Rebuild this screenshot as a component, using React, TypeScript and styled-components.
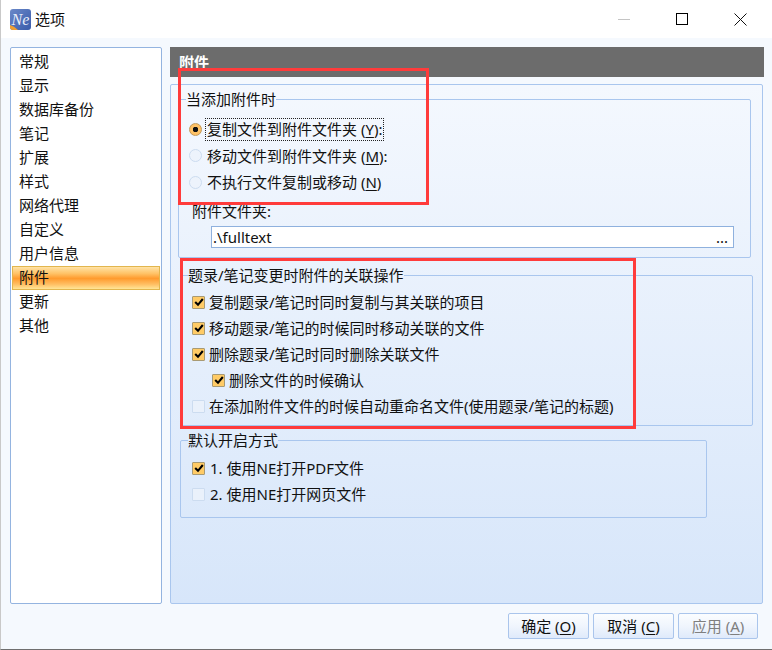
import React from "react";
import styled, { createGlobalStyle } from "styled-components";

const Global = createGlobalStyle`
  html, body { margin: 0; padding: 0; background: #fff; }
  body { font-family: "Noto Sans", "Noto Sans CJK SC", sans-serif; font-size: 15px; color: #111; }
  * { box-sizing: border-box; }
`;

const Win = styled.div`
  position: relative;
  width: 772px;
  height: 650px;
  display: flex;
  flex-direction: column;
  background: #f5f9fe;
  border-left: 1px solid #c9c9c9;
  border-bottom: 1px solid #6f6f6f;
  overflow: hidden;
`;
const TitleBar = styled.div`
  height: 38px;
  flex: none;
  display: flex;
  align-items: center;
  background: #fff;
  padding-left: 9px;
`;
const TitleText = styled.span`
  margin-left: 4px;
  font-size: 15px;
  line-height: 20px;
`;
const Controls = styled.div`
  margin-left: auto;
  display: flex;
  align-items: center;
  padding-right: 25px;
  gap: 46px;
`;
const Content = styled.div`
  flex: 1;
  display: flex;
  flex-direction: column;
  padding: 9px 8px 9px 9px;
  min-height: 0;
`;
const MainRow = styled.div`
  display: flex;
  gap: 8px;
  height: 557px;
  flex: none;
`;
const Sidebar = styled.div`
  width: 152px;
  flex: none;
  background: #fff;
  border: 1px solid #94b4e0;
  border-radius: 2px;
  padding: 2px 1px;
`;
const NavItem = styled.div<{ $active?: boolean }>`
  height: 24px;
  line-height: 21px;
  padding-left: 6px;
  border: 1px solid ${(p) => (p.$active ? "#e2b64e" : "transparent")};
  background: ${(p) =>
    p.$active
      ? "linear-gradient(180deg,#ffe3a6 0%,#ffc266 30%,#ff9b2e 52%,#ffbe62 78%,#ffe596 100%)"
      : "transparent"};
`;
const Right = styled.div`
  flex: 1;
  display: flex;
  flex-direction: column;
  gap: 7px;
  min-width: 0;
`;
const HeaderBar = styled.div`
  height: 30px;
  flex: none;
  background: #6c6c6c;
  color: #fff;
  font-weight: 700;
  font-size: 15px;
  line-height: 31px;
  padding-left: 9px;
`;
const Panel = styled.div`
  flex: 1;
  margin-right: 1px;
  background: linear-gradient(180deg, #f4f8fe 0%, #d7e6fa 100%);
  border: 1px solid #a9c6ee;
  border-radius: 2px;
  padding: 4px 0 0 0;
  display: flex;
  flex-direction: column;
`;
const Group = styled.fieldset<{ $left: number; $width: number; $top: number; $height: number; $legendLeft: number }>`
  margin: ${(p) => p.$top}px 0 0 ${(p) => p.$left}px;
  width: ${(p) => p.$width}px;
  height: ${(p) => p.$height}px;
  min-width: 0;
  flex: none;
  padding: 0;
  border: 1px solid #a9c6ee;
  border-radius: 2px;
  legend {
    margin-left: ${(p) => p.$legendLeft}px;
    padding: 0;
    height: 20px;
    line-height: 20px;
    font-size: 15px;
  }
`;
const Rows = styled.div<{ $pad: number; $left: number }>`
  display: flex;
  flex-direction: column;
  padding: ${(p) => p.$pad}px 0 0 ${(p) => p.$left}px;
`;
const Row = styled.div<{ $indent?: number; $gap: number; $h?: number }>`
  display: flex;
  align-items: center;
  height: ${(p) => p.$h ?? 26}px;
  margin-left: ${(p) => p.$indent ?? 0}px;
  gap: ${(p) => p.$gap}px;
  line-height: 20px;
  white-space: nowrap;
`;
const Focus = styled.span`
  outline: 1px dotted #222;
  outline-offset: 0;
  height: 21px;
  line-height: 20px;
  padding: 0 1px;
  margin-left: -3px;
`;
const Radio = styled.span<{ $on?: boolean }>`
  width: 13px;
  height: 13px;
  flex: none;
  border-radius: 50%;
  border: 1px solid ${(p) => (p.$on ? "#c09a5c" : "#ccdcf0")};
  background: ${(p) =>
    p.$on ? "radial-gradient(circle,#111 0 2.5px,#ffc56a 3px,#ffb957 100%)" : "#edf3fc"};
`;
const Check = styled.span<{ $on?: boolean }>`
  width: 13px;
  height: 13px;
  flex: none;
  border: 1px solid ${(p) => (p.$on ? "#a89a74" : "#ccdcf0")};
  border-radius: 1px;
  background: ${(p) => (p.$on ? "#ffcb66" : "#eaf1fb")};
  display: flex;
  align-items: center;
  justify-content: center;
`;
const FieldLabel = styled.div`
  margin: 5px 0 0 13px;
  height: 20px;
  line-height: 20px;
`;
const Input = styled.div`
  margin: 5px 0 0 32px;
  width: 523px;
  height: 22px;
  background: #fff;
  border: 1px solid #8fb1de;
  display: flex;
  align-items: center;
  justify-content: space-between;
  padding: 0 5px 0 1px;
  line-height: 20px;
`;
const Footer = styled.div`
  display: flex;
  justify-content: flex-end;
  gap: 4px;
  margin-top: 9px;
  padding-right: 6px;
`;
const Btn = styled.button<{ $w: number }>`
  width: ${(p) => p.$w}px;
  height: 26px;
  padding: 0;
  font: inherit;
  font-size: 15px;
  line-height: 20px;
  color: ${(p) => (p.disabled ? "#7f7f7f" : "#111")};
  background: linear-gradient(180deg, #fbfdff 0%, #f0f5fd 50%, #dfeafb 100%);
  border: 1px solid #aac5ec;
  border-radius: 2px;
`;
const Annotation = styled.div<{ $x: number; $y: number; $w: number; $h: number }>`
  position: absolute;
  left: ${(p) => p.$x - 1}px;
  top: ${(p) => p.$y}px;
  width: ${(p) => p.$w}px;
  height: ${(p) => p.$h}px;
  border: 3px solid #ff3b3b;
  pointer-events: none;
`;

const Tick = () => (
  <svg width="10" height="10" viewBox="0 0 10 10">
    <path d="M1.2 5 L4 7.8 L8.8 2" fill="none" stroke="#000" strokeWidth="2.1" />
  </svg>
);

const Logo = () => (
  <svg width="21" height="21" viewBox="0 0 21 21">
    <defs>
      <linearGradient id="lg" x1="0" y1="0" x2="1" y2="1">
        <stop offset="0" stopColor="#6a88c8" />
        <stop offset="1" stopColor="#3a5cab" />
      </linearGradient>
    </defs>
    <rect width="21" height="21" rx="3" fill="url(#lg)" />
    <path d="M0 16 Q4 17 8 21 H3 Q0 21 0 18 Z" fill="#f0a030" />
    <text x="1.5" y="15.5" fontFamily="Liberation Serif, serif" fontStyle="italic" fontSize="16" fill="#e8eefa">
      Ne
    </text>
  </svg>
);

const navItems = ["常规", "显示", "数据库备份", "笔记", "扩展", "样式", "网络代理", "自定义", "用户信息", "附件", "更新", "其他"];

const Key = styled.span`
  text-decoration: underline;
  text-underline-offset: 2px;
`;

export default function App() {
  return (
    <>
      <Global />
      <Win>
        <TitleBar>
          <Logo />
          <TitleText>选项</TitleText>
          <Controls>
            <svg width="12" height="12" viewBox="0 0 12 12">
              <path d="M0 6.5H12" stroke="#c4c4c4" strokeWidth="1" />
            </svg>
            <svg width="12" height="12" viewBox="0 0 12 12">
              <rect x="0.5" y="0.5" width="11" height="11" fill="none" stroke="#000" strokeWidth="1" />
            </svg>
            <svg width="13" height="13" viewBox="0 0 13 13">
              <path d="M0.5 0.5L12.5 12.5M12.5 0.5L0.5 12.5" stroke="#111" strokeWidth="1" />
            </svg>
          </Controls>
        </TitleBar>
        <Content>
          <MainRow>
            <Sidebar>
              {navItems.map((n) => (
                <NavItem key={n} $active={n === "附件"}>
                  {n}
                </NavItem>
              ))}
            </Sidebar>
            <Right>
              <HeaderBar>附件</HeaderBar>
              <Panel>
                <Group $left={7} $width={573} $top={0} $height={169} $legendLeft={7}>
                  <legend>当添加附件时</legend>
                  <Rows $pad={7} $left={10}>
                    <Row $gap={7} $h={26.5}>
                      <Radio $on />
                      <Focus>
                        复制文件到附件文件夹 (<Key>Y</Key>):
                      </Focus>
                    </Row>
                    <Row $gap={5} $h={26.5}>
                      <Radio />
                      <span>
                        移动文件到附件文件夹 (<Key>M</Key>):
                      </span>
                    </Row>
                    <Row $gap={5} $h={26.5}>
                      <Radio />
                      <span>
                        不执行文件复制或移动 (<Key>N</Key>)
                      </span>
                    </Row>
                  </Rows>
                  <FieldLabel>附件文件夹:</FieldLabel>
                  <Input>
                    <span>.\fulltext</span>
                    <span>...</span>
                  </Input>
                </Group>
                <Group $left={9} $width={573} $top={7} $height={161} $legendLeft={7}>
                  <legend>题录/笔记变更时附件的关联操作</legend>
                  <Rows $pad={4} $left={11}>
                    <Row $gap={4}>
                      <Check $on><Tick /></Check>
                      <span>复制题录/笔记时同时复制与其关联的项目</span>
                    </Row>
                    <Row $gap={4}>
                      <Check $on><Tick /></Check>
                      <span>移动题录/笔记的时候同时移动关联的文件</span>
                    </Row>
                    <Row $gap={4}>
                      <Check $on><Tick /></Check>
                      <span>删除题录/笔记时同时删除关联文件</span>
                    </Row>
                    <Row $gap={4} $indent={20}>
                      <Check $on><Tick /></Check>
                      <span>删除文件的时候确认</span>
                    </Row>
                    <Row $gap={4}>
                      <Check />
                      <span>在添加附件文件的时候自动重命名文件(使用题录/笔记的标题)</span>
                    </Row>
                  </Rows>
                </Group>
                <Group $left={9} $width={527} $top={4} $height={88} $legendLeft={7}>
                  <legend>默认开启方式</legend>
                  <Rows $pad={5} $left={11}>
                    <Row $gap={5}>
                      <Check $on><Tick /></Check>
                      <span>1. 使用NE打开PDF文件</span>
                    </Row>
                    <Row $gap={5}>
                      <Check />
                      <span>2. 使用NE打开网页文件</span>
                    </Row>
                  </Rows>
                </Group>
              </Panel>
            </Right>
          </MainRow>
          <Footer>
            <Btn $w={81}>确定 (<Key>O</Key>)</Btn>
            <Btn $w={81}>取消 (<Key>C</Key>)</Btn>
            <Btn $w={80} disabled>应用 (<Key>A</Key>)</Btn>
          </Footer>
        </Content>
        <Annotation $x={178} $y={68} $w={251} $h={137} />
        <Annotation $x={180} $y={258} $w={456} $h={171} />
      </Win>
    </>
  );
}
